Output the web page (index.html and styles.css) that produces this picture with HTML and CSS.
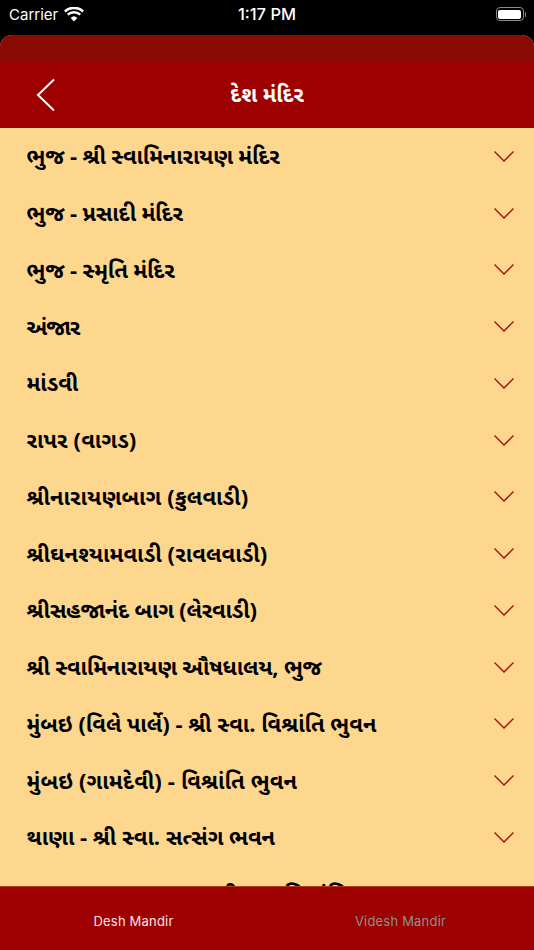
FILE: index.html
```html
<!DOCTYPE html>
<html lang="gu">
<head>
<meta charset="utf-8">
<title>દેશ મંદિર</title>
<link rel="stylesheet" href="styles.css">
</head>
<body>
<div class="screen">
  <header class="status">
    <div class="status-left">
      <span>Carrier</span>
      <svg class="wifi" viewBox="0 0 20 15" width="20" height="15"><path d="M10 14.600 6.700 10.900a4.800 4.800 0 0 1 6.600 0L10 14.600zM4.600 8.600 2.900 6.700a10.400 10.400 0 0 1 14.200 0l-1.700 1.900a7.900 7.900 0 0 0-10.800 0zM1.700 5.400 0 3.500a14.700 14.700 0 0 1 20 0l-1.700 1.900a12.200 12.200 0 0 0-16.600 0z" fill="#fff"/></svg>
    </div>
    <div class="status-time">1:17 PM</div>
    <div class="status-right">
      <div class="battery"><div class="battery-fill"></div></div>
      <div class="battery-cap"></div>
    </div>
  </header>
  <div class="sheet">
    <div class="sheet-lip"></div>
    <div class="navbar">
      <svg class="back" viewBox="0 0 20 34" width="20" height="34"><path d="M18 1.500 2 17l16 15.500" fill="none" stroke="#fff" stroke-width="2"/></svg>
      <h1 class="title">દેશ મંદિર</h1>
    </div>
    <main class="list">
      <div class="row"><span class="label tight">ભુજ - શ્રી સ્વામિનારાયણ મંદિર</span><svg class="chev" viewBox="0 0 20 11" width="20" height="11"><path d="M.5.5 10 10 19.500.5" fill="none" stroke="#a50c0c" stroke-width="1.300"/></svg></div>
      <div class="row"><span class="label tight">ભુજ - પ્રસાદી મંદિર</span><svg class="chev" viewBox="0 0 20 11" width="20" height="11"><path d="M.5.5 10 10 19.500.5" fill="none" stroke="#a50c0c" stroke-width="1.300"/></svg></div>
      <div class="row"><span class="label tight">ભુજ - સ્મૃતિ મંદિર</span><svg class="chev" viewBox="0 0 20 11" width="20" height="11"><path d="M.5.5 10 10 19.500.5" fill="none" stroke="#a50c0c" stroke-width="1.300"/></svg></div>
      <div class="row"><span class="label tighter">અંજાર</span><svg class="chev" viewBox="0 0 20 11" width="20" height="11"><path d="M.5.5 10 10 19.500.5" fill="none" stroke="#a50c0c" stroke-width="1.300"/></svg></div>
      <div class="row"><span class="label">માંડવી</span><svg class="chev" viewBox="0 0 20 11" width="20" height="11"><path d="M.5.5 10 10 19.500.5" fill="none" stroke="#a50c0c" stroke-width="1.300"/></svg></div>
      <div class="row"><span class="label wide">રાપર (વાગડ)</span><svg class="chev" viewBox="0 0 20 11" width="20" height="11"><path d="M.5.5 10 10 19.500.5" fill="none" stroke="#a50c0c" stroke-width="1.300"/></svg></div>
      <div class="row"><span class="label wide">શ્રીનારાયણબાગ (કુલવાડી)</span><svg class="chev" viewBox="0 0 20 11" width="20" height="11"><path d="M.5.5 10 10 19.500.5" fill="none" stroke="#a50c0c" stroke-width="1.300"/></svg></div>
      <div class="row"><span class="label wide">શ્રીઘનશ્યામવાડી (રાવલવાડી)</span><svg class="chev" viewBox="0 0 20 11" width="20" height="11"><path d="M.5.5 10 10 19.500.5" fill="none" stroke="#a50c0c" stroke-width="1.300"/></svg></div>
      <div class="row"><span class="label tight">શ્રીસહજાનંદ બાગ (લેરવાડી)</span><svg class="chev" viewBox="0 0 20 11" width="20" height="11"><path d="M.5.5 10 10 19.500.5" fill="none" stroke="#a50c0c" stroke-width="1.300"/></svg></div>
      <div class="row"><span class="label tight">શ્રી સ્વામિનારાયણ ઔષધાલય, ભુજ</span><svg class="chev" viewBox="0 0 20 11" width="20" height="11"><path d="M.5.5 10 10 19.500.5" fill="none" stroke="#a50c0c" stroke-width="1.300"/></svg></div>
      <div class="row"><span class="label">મુંબઇ (વિલે પાર્લે) - શ્રી સ્વા. વિશ્રાંતિ ભુવન</span><svg class="chev" viewBox="0 0 20 11" width="20" height="11"><path d="M.5.5 10 10 19.500.5" fill="none" stroke="#a50c0c" stroke-width="1.300"/></svg></div>
      <div class="row"><span class="label wide">મુંબઇ (ગામદેવી) - વિશ્રાંતિ ભુવન</span><svg class="chev" viewBox="0 0 20 11" width="20" height="11"><path d="M.5.5 10 10 19.500.5" fill="none" stroke="#a50c0c" stroke-width="1.300"/></svg></div>
      <div class="row"><span class="label">થાણા - શ્રી સ્વા. સત્સંગ ભવન</span><svg class="chev" viewBox="0 0 20 11" width="20" height="11"><path d="M.5.5 10 10 19.500.5" fill="none" stroke="#a50c0c" stroke-width="1.300"/></svg></div>
      <div class="row"><span class="label">અમદાવાદ નારણપુરા - શ્રી ધામ વિશ્રાંતિ ભવન</span></div>
    </main>
    <nav class="tabs">
      <div class="tab tab-on">Desh Mandir</div>
      <div class="tab tab-off">Videsh Mandir</div>
    </nav>
  </div>
</div>
</body>
</html>
```
FILE: styles.css
```css
* { box-sizing: border-box; }
html, body { margin: 0; padding: 0; background: #000; }
.screen {
  width: 534px; height: 950px; display: flex; flex-direction: column;
  overflow: hidden; font-family: Inter, "Liberation Sans", sans-serif; color: #fff;
}
.status {
  height: 35px; flex: none; display: grid; grid-template-columns: 1fr auto 1fr;
  align-items: center; padding: 0 0 7px; font-size: 15px;
}
.status-left { display: flex; align-items: center; gap: 6px; padding-left: 9px; }
.status-time { font-size: 16.500px; font-weight: 500; }
.status-right { display: flex; align-items: center; justify-content: flex-end; padding-right: 8px; }
.battery { width: 28px; height: 14px; border: 1px solid #8a8a8a; border-radius: 4px; padding: 1.500px; }
.battery-fill { width: 100%; height: 100%; background: #fff; border-radius: 2px; }
.battery-cap { width: 1.500px; height: 5px; background: #8a8a8a; margin-left: 1px; border-radius: 0 1px 1px 0; }
.sheet {
  flex: 1; min-height: 0; display: flex; flex-direction: column;
  border-radius: 12px 12px 0 0; overflow: hidden; background: #fed78f;
}
.sheet-lip { height: 26px; flex: none; background: #8a0a04; }
.navbar {
  height: 67px; flex: none; background: #9e0000; display: flex; align-items: center;
  justify-content: center; position: relative; padding-top: 5px;
}
.back { position: absolute; left: 36px; top: 17px; }
.title {
  margin: 0; font-size: 21.500px; font-weight: 700; color: #fff;
  font-family: "Noto Sans Gujarati", "Noto Sans", "Liberation Sans", sans-serif;
}
.list { flex: 1; min-height: 0; overflow: hidden; }
.row {
  height: 56.750px; display: flex; align-items: center; justify-content: space-between;
  padding: 0 20px 0 26.500px;
}
.label {
  font-size: 22px; font-weight: 700; color: #000; white-space: nowrap; padding-top: 5px;
  font-family: "Noto Sans Gujarati", "Noto Sans", "Liberation Sans", sans-serif;
}
.tight { letter-spacing: -.2px; }
.tighter { letter-spacing: -1px; }
.wide { letter-spacing: .15px; }
.chev { flex: none; }
.tabs {
  height: 64px; flex: none; background: #9e0000; display: grid; grid-template-columns: 1fr 1fr;
  border-top: 1px solid #b0401a;
}
.tab { text-align: center; font-size: 13px; padding-top: 26px; letter-spacing: .2px; }
.tab-on { color: #f4e6e6; }
.tab-off { color: #8f8f8f; }
```
